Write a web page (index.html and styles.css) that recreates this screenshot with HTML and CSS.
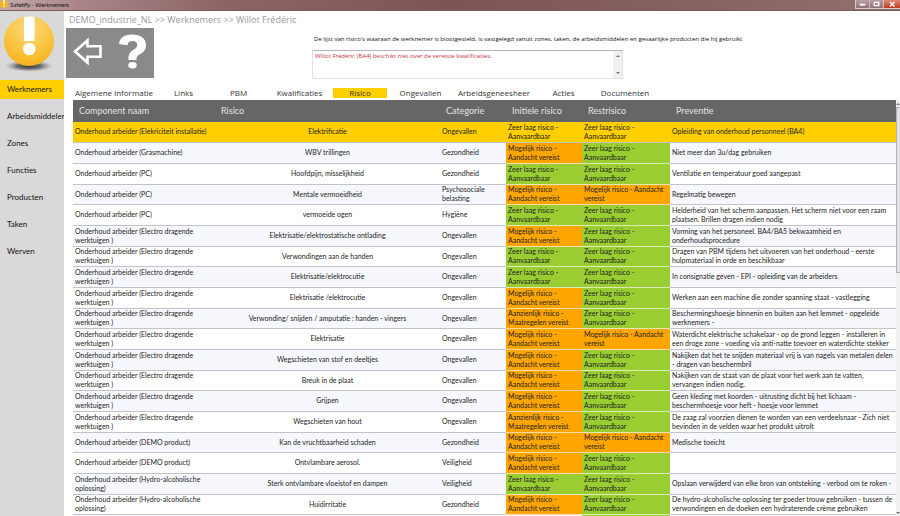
FILE: index.html
```
<!DOCTYPE html>
<html lang="nl">
<head>
<meta charset="utf-8">
<title>Safetify - Werknemers</title>
<link rel="stylesheet" href="styles.css">
</head>
<body>
<header class="titlebar">
  <svg class="app-icon" viewBox="0 0 8 8" aria-hidden="true"><circle cx="4" cy="4" r="4" fill="#f9b21e"/><path d="M3.300 0h1.400v4.500H3.300zM3.300 5.500h1.400V7H3.300z" fill="#fff"/></svg>
  <h1 class="window-title">Safetify - Werknemers</h1>
  <div class="window-buttons">
    <button class="win-btn" aria-label="Minimaliseren"><svg viewBox="0 0 14 8"><rect x="4" y="4" width="6" height="2" fill="#fff"/></svg></button>
    <button class="win-btn" aria-label="Maximaliseren"><svg viewBox="0 0 14 8"><rect x="4.500" y="2.500" width="5" height="3.500" fill="none" stroke="#fff" stroke-width="1.400"/></svg></button>
    <button class="win-btn close" aria-label="Sluiten"><svg viewBox="0 0 16 8"><path d="M6 2l4.500 4.500M10.500 2L6 6.500" stroke="#fff" stroke-width="1.500"/></svg></button>
  </div>
</header>
<div class="app">
  <aside class="sidebar">
    <svg class="logo" viewBox="0 0 64 69" role="img" aria-label="Safetify">
      <defs>
        <radialGradient id="ball" cx="0.500" cy="0.250" r="0.800"><stop offset="0" stop-color="#fbd985"/><stop offset="0.500" stop-color="#fac845"/><stop offset="1" stop-color="#f6ae18"/></radialGradient>
        <radialGradient id="shade"><stop offset="0" stop-color="#333"/><stop offset="0.500" stop-color="#555" stop-opacity="0.800"/><stop offset="1" stop-color="#aaa" stop-opacity="0"/></radialGradient>
      </defs>
      <ellipse cx="29" cy="55" rx="25" ry="6" fill="url(#shade)"/>
      <circle cx="29" cy="30" r="25" fill="url(#ball)"/>
      <path d="M24 6q5-1.500 10.500 0v24H24z" fill="#fff"/>
      <circle cx="29.300" cy="38" r="6.300" fill="#fff"/>
    </svg>
    <nav class="side-nav">
      <a class="side-link active" href="#">Werknemers</a>
      <a class="side-link" href="#">Arbeidsmiddelen</a>
      <a class="side-link" href="#">Zones</a>
      <a class="side-link" href="#">Functies</a>
      <a class="side-link" href="#">Producten</a>
      <a class="side-link" href="#">Taken</a>
      <a class="side-link" href="#">Werven</a>
    </nav>
  </aside>
  <main class="content">
    <nav class="crumbs">DEMO_industrie_NL &gt;&gt; Werknemers &gt;&gt; Willot Frédéric</nav>
    <div class="top">
      <div class="tools">
        <button class="tool" aria-label="Terug"><svg viewBox="0 0 44 49"><path d="M9 22.500L21.500 11.500v5.800h13v10.400h-13v5.800z" fill="none" stroke="#fff" stroke-width="2.600"/></svg></button>
        <button class="tool" aria-label="Help"><svg viewBox="0 0 44 49"><path d="M9 15C9.500 8.500 15 5.500 22 5.500C30.500 5.500 36 9.500 36 16C36 21 33 23.500 29.500 25.500C27 27 26.500 28 26.500 31H18.500C18 25.500 20 23 23.500 20.800C26 19.200 27.300 18.200 27.300 15.800C27.300 13.500 25.500 12 22.500 12C19.500 12 17.800 13.500 17.300 16.300z" fill="#fff"/><ellipse cx="22.500" cy="36.300" rx="4.200" ry="3.200" fill="#fff"/></svg></button>
      </div>
      <div class="notice">
        <label class="notice-label" for="msg">De lijst van risico's waaraan de werknemer is blootgesteld, is vastgelegd vanuit zones, taken, de arbeidsmiddelen en gevaarlijke producten die hij gebruikt</label>
        <div class="message">
          <textarea id="msg" readonly>Willot Frédéric (BA4) beschikt niet over de vereiste kwalificaties.</textarea>
          <span class="message-bar"><i class="arrow up"></i><i class="arrow down"></i></span>
        </div>
      </div>
    </div>
    <nav class="tabs">
      <a href="#">Algemene informatie</a>
      <a href="#">Links</a>
      <a href="#">PBM</a>
      <a href="#">Kwalificaties</a>
      <a class="active" href="#">Risico</a>
      <a href="#">Ongevallen</a>
      <a href="#">Arbeidsgeneesheer</a>
      <a href="#">Acties</a>
      <a href="#">Documenten</a>
    </nav>
    <div class="grid">
      <table class="risks">
        <colgroup><col class="c-name"><col class="c-risk"><col class="c-cat"><col class="c-level"><col class="c-rest"><col></colgroup>
        <thead>
          <tr><th>Component naam</th><th>Risico</th><th>Categorie</th><th>Initiele risico</th><th>Restrisico</th><th>Preventie</th></tr>
        </thead>
        <tbody>
          <tr class="selected"><td>Onderhoud arbeider (Elekriciteit installatie)</td><td>Elektrificatie</td><td>Ongevallen</td><td>Zeer laag risico -<br>Aanvaardbaar</td><td>Zeer laag risico -<br>Aanvaardbaar</td><td>Opleiding van onderhoud personneel (BA4)</td></tr>
          <tr><td>Onderhoud arbeider (Grasmachine)</td><td>WBV trillingen</td><td>Gezondheid</td><td class="mid">Mogelijk risico -<br>Aandacht vereist</td><td class="low">Zeer laag risico -<br>Aanvaardbaar</td><td>Niet meer dan 3u/dag gebruiken</td></tr>
          <tr><td>Onderhoud arbeider (PC)</td><td>Hoofdpijn, misselijkheid</td><td>Gezondheid</td><td class="low">Zeer laag risico -<br>Aanvaardbaar</td><td class="low">Zeer laag risico -<br>Aanvaardbaar</td><td>Ventilatie en temperatuur goed aangepast</td></tr>
          <tr><td>Onderhoud arbeider (PC)</td><td>Mentale vermoeidheid</td><td>Psychosociale<br>belasting</td><td class="mid">Mogelijk risico -<br>Aandacht vereist</td><td class="mid">Mogelijk risico - Aandacht<br>vereist</td><td>Regelmatig bewegen</td></tr>
          <tr><td>Onderhoud arbeider (PC)</td><td>vermoeide ogen</td><td>Hygiëne</td><td class="low">Zeer laag risico -<br>Aanvaardbaar</td><td class="low">Zeer laag risico -<br>Aanvaardbaar</td><td>Helderheid van het scherm aanpassen. Het scherm niet voor een raam<br>plaatsen. Brillen dragen indien nodig</td></tr>
          <tr><td>Onderhoud arbeider (Electro dragende<br>werktuigen )</td><td>Elektrisatie/elektrostatische ontlading</td><td>Ongevallen</td><td class="mid">Mogelijk risico -<br>Aandacht vereist</td><td class="low">Zeer laag risico -<br>Aanvaardbaar</td><td>Vorming van het personeel. BA4/BA5 bekwaamheid en<br>onderhoudsprocedure</td></tr>
          <tr><td>Onderhoud arbeider (Electro dragende<br>werktuigen )</td><td>Verwondingen aan de handen</td><td>Ongevallen</td><td class="low">Zeer laag risico -<br>Aanvaardbaar</td><td class="low">Zeer laag risico -<br>Aanvaardbaar</td><td>Dragen van PBM tijdens het uitvoeren van het onderhoud - eerste<br>hulpmateriaal in orde en beschikbaar</td></tr>
          <tr><td>Onderhoud arbeider (Electro dragende<br>werktuigen )</td><td>Elektrisatie/elektrocutie</td><td>Ongevallen</td><td class="low">Zeer laag risico -<br>Aanvaardbaar</td><td class="low">Zeer laag risico -<br>Aanvaardbaar</td><td>In consignatie geven - EPI - opleiding van de arbeiders</td></tr>
          <tr><td>Onderhoud arbeider (Electro dragende<br>werktuigen )</td><td>Elektrisatie /elektrocutie</td><td>Ongevallen</td><td class="mid">Mogelijk risico -<br>Aandacht vereist</td><td class="low">Zeer laag risico -<br>Aanvaardbaar</td><td>Werken aan een machine die zonder spanning staat - vastlegging</td></tr>
          <tr><td>Onderhoud arbeider (Electro dragende<br>werktuigen )</td><td>Verwonding/ snijden / amputatie : handen - vingers</td><td>Ongevallen</td><td class="mid">Aanzienlijk risico -<br>Maatregelen vereist</td><td class="low">Zeer laag risico -<br>Aanvaardbaar</td><td>Beschermingshoesje binnenin en buiten aan het lemmet - opgeleide<br>werknemers -</td></tr>
          <tr><td>Onderhoud arbeider (Electro dragende<br>werktuigen )</td><td>Elektrisatie</td><td>Ongevallen</td><td class="mid">Mogelijk risico -<br>Aandacht vereist</td><td class="mid">Mogelijk risico - Aandacht<br>vereist</td><td>Waterdicht elektrische schakelaar - op de grond leggen - installeren in<br>een droge zone - voeding via anti-natte toevoer en waterdichte stekker</td></tr>
          <tr><td>Onderhoud arbeider (Electro dragende<br>werktuigen )</td><td>Wegschieten van stof en deeltjes</td><td>Ongevallen</td><td class="mid">Mogelijk risico -<br>Aandacht vereist</td><td class="low">Zeer laag risico -<br>Aanvaardbaar</td><td>Nakijken dat het te snijden materiaal vrij is van nagels van metalen delen<br>- dragen van beschermbril</td></tr>
          <tr><td>Onderhoud arbeider (Electro dragende<br>werktuigen )</td><td>Breuk in de plaat</td><td>Ongevallen</td><td class="mid">Mogelijk risico -<br>Aandacht vereist</td><td class="low">Zeer laag risico -<br>Aanvaardbaar</td><td>Nakijken van de staat van de plaat voor het werk aan te vatten,<br>vervangen indien nodig.</td></tr>
          <tr><td>Onderhoud arbeider (Electro dragende<br>werktuigen )</td><td>Grijpen</td><td>Ongevallen</td><td class="mid">Mogelijk risico -<br>Aandacht vereist</td><td class="low">Zeer laag risico -<br>Aanvaardbaar</td><td>Geen kleding met koorden - uitrusting dicht bij het lichaam -<br>beschermhoesje voor heft - hoesje voor lemmet</td></tr>
          <tr><td>Onderhoud arbeider (Electro dragende<br>werktuigen )</td><td>Wegschieten van hout</td><td>Ongevallen</td><td class="mid">Aanzienlijk risico -<br>Maatregelen vereist</td><td class="low">Zeer laag risico -<br>Aanvaardbaar</td><td>De zaag zal voorzien dienen te worden van een verdeelsnaar - Zich niet<br>bevinden in de velden waar het produkt uitrolt</td></tr>
          <tr><td>Onderhoud arbeider (DEMO product)</td><td>Kan de vruchtbaarheid schaden</td><td>Gezondheid</td><td class="mid">Mogelijk risico -<br>Aandacht vereist</td><td class="mid">Mogelijk risico - Aandacht<br>vereist</td><td>Medische toeicht</td></tr>
          <tr><td>Onderhoud arbeider (DEMO product)</td><td>Ontvlambare aerosol.</td><td>Veiligheid</td><td class="mid">Mogelijk risico -<br>Aandacht vereist</td><td class="low">Zeer laag risico -<br>Aanvaardbaar</td><td></td></tr>
          <tr><td>Onderhoud arbeider (Hydro-alcoholische<br>oplossing)</td><td>Sterk ontvlambare vloeistof en dampen</td><td>Veiligheid</td><td class="low">Zeer laag risico -<br>Aanvaardbaar</td><td class="low">Zeer laag risico -<br>Aanvaardbaar</td><td>Opslaan verwijderd van elke bron van ontsteking - verbod om te roken -</td></tr>
          <tr><td>Onderhoud arbeider (Hydro-alcoholische<br>oplossing)</td><td>Huidirritatie</td><td>Gezondheid</td><td class="mid">Mogelijk risico -<br>Aandacht vereist</td><td class="low">Zeer laag risico -<br>Aanvaardbaar</td><td>De hydro-alcoholische oplossing ter goeder trouw gebruiken - tussen de<br>verwondingen en de doeken een hydraterende crème gebruiken</td></tr>
          <tr><td></td><td></td><td></td><td></td><td class="low"></td><td></td></tr>
        </tbody>
      </table>
      <div class="scrollbar"><i class="arrow up"></i><span class="thumb"></span><i class="arrow down"></i></div>
    </div>
  </main>
</div>
</body>
</html>
```
FILE: styles.css
```
* { box-sizing: border-box; }

body {
  margin: 0;
  height: 100vh;
  display: flex;
  flex-direction: column;
  overflow: hidden;
  background: #fff;
  color: #222;
  font-family: Lato, "Noto Sans", sans-serif;
}

a { color: inherit; text-decoration: none; }
button { padding: 0; border: 0; }
svg { display: block; }

/* Window frame */
.titlebar {
  flex: none;
  display: flex;
  height: 11px;
  background: linear-gradient(90deg, #c5aaab 0, #a98486 80px, #8c6466 25%, #7d5557 50%, #845d5f 70%, #93706f 100%);
  border-bottom: 1px solid #7a5a5c;
}
.app-icon { flex: none; width: 8px; height: 8px; }
.window-title { margin: 0 0 0 2px; font-size: 6px; line-height: 10px; font-weight: 400; color: #111; }
.window-buttons { display: flex; margin-left: auto; height: 9px; border: 1px solid #d8c8c8; border-top: 0; border-right: 0; }
.win-btn { width: 14px; background: linear-gradient(#b9a0a1, #8d7274); border-right: 1px solid #cbb9ba; }
.win-btn.close { width: 16px; background: linear-gradient(#d98b78, #c23a1c); border: 0; }

.app { flex: 1; display: flex; min-height: 0; }

/* Sidebar */
.sidebar { flex: none; width: 64px; overflow: hidden; background: #d9d9d9; }
.logo { width: 64px; height: 69px; }
.side-nav { display: flex; flex-direction: column; gap: 8px; }
.side-link { padding-left: 7px; font-size: 8px; line-height: 19px; white-space: nowrap; color: #111; }
.side-link.active { background: #ffcf00; }

/* Content */
.content { flex: 1; min-width: 0; display: flex; flex-direction: column; }
.crumbs { padding-left: 5px; font-family: "Open Sans", sans-serif; font-size: 9px; line-height: 17px; color: #999; }
.top { display: flex; padding-left: 2px; }
.tools { display: flex; flex: none; height: 50px; background: #8a8a8a; }
.tool { width: 44px; background: none; }
.tool svg { width: 44px; height: 49px; }
.notice { flex: none; display: flex; flex-direction: column; margin-left: 158px; font-family: "Open Sans", sans-serif; }
.notice-label { padding: 6px 0 6px 2px; font-size: 6px; line-height: 10px; color: #111; }
.message { display: flex; width: 311px; height: 29px; border: 1px solid #e2e2e2; border-top-color: #b5b5b5; }
.message textarea { flex: 1; min-width: 0; padding: 1px 2px; border: 0; resize: none; overflow: hidden; outline: 0; font: inherit; font-size: 6px; line-height: 9px; color: #c8323c; }
.message-bar { display: flex; flex-direction: column; justify-content: space-between; align-items: center; width: 9px; padding: 4px 0; background: #f0f0f0; }
.arrow { width: 0; height: 0; border: 2px solid transparent; }
.arrow.up { border-top: 0; border-bottom-color: #777; }
.arrow.down { border-bottom: 0; border-top-color: #777; }

.tabs { display: grid; grid-template-columns: 84px 55px 55px 67px 54px 67px 80px 59px 64px; margin: 9px 0 2px 8px; }
.tabs a { font-family: "Open Sans", sans-serif; font-size: 8px; line-height: 10px; text-align: center; white-space: nowrap; color: #333; }
.tabs .active { background: #ffcf00; }

/* Risk table */
.grid { flex: 1; display: flex; min-height: 0; margin-left: 9px; overflow: hidden; }
.risks { flex: 1; align-self: flex-start; min-width: 0; table-layout: fixed; border-collapse: collapse; }
.c-name { width: 142px; }
.c-risk { width: 225px; }
.c-cat { width: 66px; }
.c-level { width: 76px; }
.c-rest { width: 88px; }
.risks th { height: 22px; padding: 0 6px; background: #666; color: #e2e2e2; font-size: 9px; line-height: 12px; font-weight: 400; text-align: left; }
.risks td { height: 21px; padding: 0 2px; border-bottom: 1px solid #c3c3c9; font-size: 7px; line-height: 9px; white-space: nowrap; }
.risks tr:nth-child(3n+1) td { height: 20px; }
.risks td:nth-child(2) { text-align: center; }
.risks tbody tr:nth-child(even) { background: #f7f8fe; }
.risks tbody .selected { background: #ffcf00; }
.risks .low { background: #9acd32; border-bottom-color: #dcebb8; }
.risks .mid { background: #ffa500; border-bottom-color: #fbdca4; }

.scrollbar { flex: none; display: flex; flex-direction: column; align-items: center; width: 4px; background: #f0f0f0; padding: 3px 0 2px; }
.thumb { width: 4px; height: 166px; margin: 2px 0 auto; border: 1px solid #b0b0b6; border-right: 0; background: #e2e2e6; }
```
